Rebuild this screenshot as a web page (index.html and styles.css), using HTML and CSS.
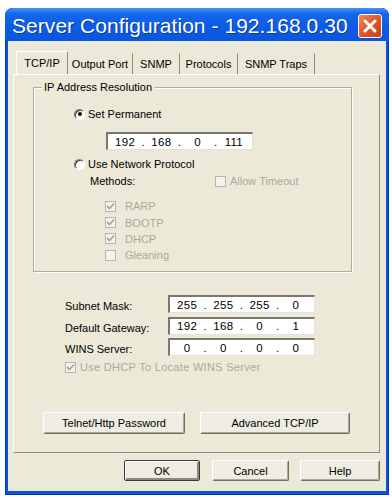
FILE: index.html
```html
<!DOCTYPE html>
<html>
<head>
<meta charset="utf-8">
<link rel="stylesheet" href="styles.css">
</head>
<body>
<div class="window">
  <div class="titlebar">
    <span class="title">Server Configuration - 192.168.0.30</span>
    <div class="close">
      <svg width="24" height="24" viewBox="0 0 24 24"><path d="M7 7 L17 17 M17 7 L7 17" stroke="#fff" stroke-width="3" stroke-linecap="round"/></svg>
    </div>
  </div>
  <div class="client">
    <div class="tabs">
      <div class="tab active">TCP/IP</div>
      <div class="tab w-out">Output Port</div>
      <div class="tab w-snmp">SNMP</div>
      <div class="tab w-proto">Protocols</div>
      <div class="tab w-traps">SNMP Traps</div>
    </div>
    <div class="panel">
      <div class="group">
        <span class="legend">IP Address Resolution</span>
        <div class="opt opt-perm"><span class="radio checked"></span>Set Permanent</div>
        <div class="ipbox ip-perm"><span class="oct">192</span><span class="dot">.</span><span class="oct">168</span><span class="dot">.</span><span class="oct">0</span><span class="dot">.</span><span class="oct">111</span></div>
        <div class="opt opt-net"><span class="radio"></span>Use Network Protocol</div>
        <div class="methods-row">
          <span class="methods">Methods:</span>
          <span class="chk-item disabled"><span class="check"></span>Allow Timeout</span>
        </div>
        <div class="method-list">
          <div class="chk-item disabled"><span class="check checked"><svg width="9" height="9" viewBox="0 0 9 9"><path d="M1 4 L3.5 6.5 L8 1.5" fill="none" stroke="#a7a69c" stroke-width="1.8"/></svg></span>RARP</div>
          <div class="chk-item disabled"><span class="check checked"><svg width="9" height="9" viewBox="0 0 9 9"><path d="M1 4 L3.5 6.5 L8 1.5" fill="none" stroke="#a7a69c" stroke-width="1.8"/></svg></span>BOOTP</div>
          <div class="chk-item disabled"><span class="check checked"><svg width="9" height="9" viewBox="0 0 9 9"><path d="M1 4 L3.5 6.5 L8 1.5" fill="none" stroke="#a7a69c" stroke-width="1.8"/></svg></span>DHCP</div>
          <div class="chk-item disabled"><span class="check"></span>Gleaning</div>
        </div>
      </div>
      <div class="fields">
        <div class="field"><span class="label">Subnet Mask:</span><div class="ipbox"><span class="oct">255</span><span class="dot">.</span><span class="oct">255</span><span class="dot">.</span><span class="oct">255</span><span class="dot">.</span><span class="oct">0</span></div></div>
        <div class="field"><span class="label">Default Gateway:</span><div class="ipbox"><span class="oct">192</span><span class="dot">.</span><span class="oct">168</span><span class="dot">.</span><span class="oct">0</span><span class="dot">.</span><span class="oct">1</span></div></div>
        <div class="field"><span class="label">WINS Server:</span><div class="ipbox"><span class="oct">0</span><span class="dot">.</span><span class="oct">0</span><span class="dot">.</span><span class="oct">0</span><span class="dot">.</span><span class="oct">0</span></div></div>
      </div>
      <div class="chk-item disabled wins"><span class="check checked"><svg width="9" height="9" viewBox="0 0 9 9"><path d="M1 4 L3.5 6.5 L8 1.5" fill="none" stroke="#a7a69c" stroke-width="1.8"/></svg></span>Use DHCP To Locate WINS Server</div>
      <div class="btn-row">
        <div class="btn b-telnet">Telnet/Http Password</div>
        <div class="btn b-adv">Advanced TCP/IP</div>
      </div>
    </div>
    <div class="dialog-btns">
      <div class="btn b-ok default">OK</div>
      <div class="btn b-cancel">Cancel</div>
      <div class="btn b-help">Help</div>
    </div>
  </div>
</div>
</body>
</html>
```
FILE: styles.css
```css
* { box-sizing: border-box; }
html, body { margin: 0; padding: 0; background: #ffffff; }
body { font-family: "Liberation Sans", Arial, sans-serif; font-size: 11px; color: #000; }

.window {
  margin: 8px 0 0 5px;
  width: 384px;
  height: 487px;
  background: #0a52dc;
  border-radius: 8px 8px 0 0;
  padding: 0 3px 4px 3px;
  display: flex;
  flex-direction: column;
  box-shadow: inset 0 0 0 1px #0a3aa8;
}
.titlebar {
  height: 33px;
  flex: none;
  display: flex;
  align-items: center;
  justify-content: space-between;
  padding: 0 4px 0 4px;
  margin: 0 -3px;
  border-radius: 8px 8px 0 0;
  background: linear-gradient(#4a90f6 0%, #1466ec 18%, #0c5de6 55%, #0a55de 100%);
}
.title {
  flex: none;
  white-space: nowrap;
  color: #fff;
  font-size: 21px;
  letter-spacing: 0.05px;
  padding-left: 3px;
  margin-top: 3px;
  text-shadow: 1px 1px 0 #0a3aa0;
}
.close {
  flex: none;
  width: 24px;
  height: 24px;
  margin-right: 3px;
  margin-top: 3px;
  border-radius: 3px;
  border: 1px solid #fff;
  background: linear-gradient(135deg, #f08a5c 0%, #e0562a 50%, #cc3e14 100%);
  display: flex;
  align-items: center;
  justify-content: center;
}
.close svg { display: block; margin: -1px; }

.client {
  flex: 1;
  background: #ECE9D8;
  padding: 10px 6px 0 5px;
  display: flex;
  flex-direction: column;
}
.tabs {
  height: 23px;
  display: flex;
  align-items: flex-end;
  padding-left: 3px;
}
.tab {
  height: 21px;
  display: flex;
  align-items: center;
  justify-content: center;
  border-right: 1px solid #8c8a7e;
  border-top: 1px solid transparent;
  color: #000;
}
.tab.active {
  width: 52px;
  height: 24px;
  margin-bottom: -1px;
  background: #ECE9D8;
  border-left: 1px solid #fff;
  border-top: 1px solid #fff;
  border-right: 1px solid #8c8a7e;
  border-radius: 2px 2px 0 0;
  padding-bottom: 2px;
}
.w-out { width: 65px; }
.w-snmp { width: 47px; }
.w-proto { width: 58px; }
.w-traps { width: 77px; }

.panel {
  width: 367px;
  height: 379px;
  border-top: 1px solid #fff;
  border-left: 1px solid #fff;
  border-right: 1px solid #8c8a7e;
  border-bottom: 1px solid #8c8a7e;
  background: #ECE9D8;
  padding: 12px 0 0 19px;
  display: flex;
  flex-direction: column;
}
.group {
  position: relative;
  width: 319px;
  height: 185px;
  border: 1px solid #b1ae9f;
  box-shadow: 1px 1px 0 #fff, inset 1px 1px 0 #fff;
  display: flex;
  flex-direction: column;
}
.legend {
  position: absolute;
  top: -7px;
  left: 8px;
  padding: 0 3px 0 2px;
  background: #ECE9D8;
  line-height: 13px;
}
.opt {
  height: 16px;
  display: flex;
  align-items: center;
  padding-left: 40px;
}
.opt-perm { margin-top: 18px; }
.opt-net { margin-top: 6px; }
.radio {
  width: 11px;
  height: 11px;
  border-radius: 50%;
  background: #fff;
  border: 1px solid;
  border-color: #7d7b70 #ffffff #ffffff #7d7b70;
  box-shadow: inset 1px 1px 0 #404040;
  margin-right: 3px;
  display: flex;
  align-items: center;
  justify-content: center;
}
.radio.checked::after {
  content: "";
  width: 4px;
  height: 4px;
  border-radius: 50%;
  background: #000;
}
.ipbox {
  width: 147px;
  height: 18px;
  background: #fff;
  border-top: 2px solid #7a786d;
  border-left: 2px solid #7a786d;
  border-right: 1px solid #e4e2d6;
  border-bottom: 1px solid #e4e2d6;
  display: flex;
  align-items: center;
  padding: 0 2px 0 1px;
  font-size: 11.5px;
  letter-spacing: 0.3px;
}
.ip-perm { margin: 10px 0 0 72px; }
.oct { flex: 1; text-align: center; }
.dot { width: 4px; text-align: center; }

.methods-row {
  height: 16px;
  margin-top: 1px;
  display: flex;
  align-items: center;
}
.methods { margin-left: 56px; width: 125px; }
.chk-item {
  display: flex;
  align-items: center;
}
.disabled { color: #aca899; }
.check {
  width: 11px;
  height: 11px;
  border: 1px solid #b8b6aa;
  background: #f4f3ee;
  margin-right: 4px;
  display: flex;
  align-items: center;
  justify-content: center;
}
.method-list {
  margin: 9px 0 0 71px;
  display: flex;
  flex-direction: column;
}
.method-list .chk-item { height: 16.4px; }
.method-list .check { margin-right: 9px; }

.fields {
  margin-top: 23px;
  display: flex;
  flex-direction: column;
  gap: 3.5px;
}
.field {
  display: flex;
  align-items: center;
}
.label {
  width: 135px;
  padding-left: 32px;
  padding-top: 4px;
}
.wins {
  height: 16px;
  margin: 3px 0 0 32px;
  letter-spacing: 0.3px;
}
.btn-row {
  margin: 37px 0 0 10px;
  display: flex;
  gap: 15px;
}
.btn {
  height: 22px;
  display: flex;
  align-items: center;
  justify-content: center;
  background: #efede3;
  border: 1px solid;
  border-color: #ffffff #716f64 #716f64 #ffffff;
  box-shadow: inset -1px -1px 0 #aca899;
  border-radius: 2px;
}
.b-telnet { width: 142px; }
.b-adv { width: 150px; }
.dialog-btns {
  margin-top: 7px;
  display: flex;
  justify-content: flex-end;
  padding-right: 0;
}
.dialog-btns .btn { height: 21px; }
.b-ok { width: 76px; margin-right: 12px; }
.b-cancel { width: 77px; margin-right: 11px; }
.b-help { width: 80px; }
.btn.default {
  border: 1px solid #3a3a34;
  box-shadow: inset 1px 1px 0 #fff, inset -2px -2px 0 #8c8a7e;
}
```
